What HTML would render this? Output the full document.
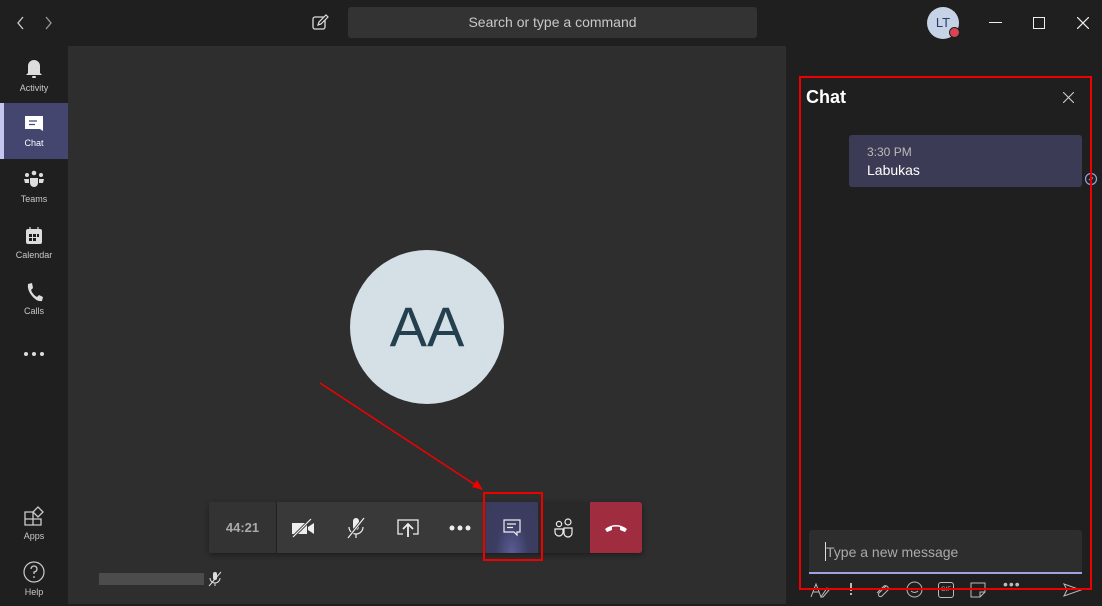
<!DOCTYPE html>
<html><head><meta charset="utf-8"><style>
*{margin:0;padding:0;box-sizing:border-box}
body{width:1102px;height:604px;background:#1f1f1f;font-family:"Liberation Sans","Segoe UI",sans-serif;position:relative;overflow:hidden;color:#ddd}
.abs{position:absolute}
.rail .it{position:absolute;left:0;width:68px;height:56px;text-align:center;font-size:9px;color:#c8c8c8}
.rail .it svg{display:block;margin:11px auto 4px}
.tb{position:absolute;top:502px;height:51px;width:52px;display:flex;align-items:center;justify-content:center}
</style></head><body>
<!-- title bar -->
<svg class="abs" style="left:14px;top:15px" width="44" height="16"><path d="M9 2 L4 8 L9 14" stroke="#ccc" fill="none" stroke-width="1.3"/><path d="M32 2 L37 8 L32 14" stroke="#999" fill="none" stroke-width="1.3"/></svg>
<svg class="abs" style="left:311px;top:14px" width="18" height="18"><rect x="2" y="3" width="12" height="12" rx="2" stroke="#ddd" fill="none" stroke-width="1.3"/><path d="M7 11 L8 8 L15 1 L17 3 L10 10 Z" fill="#1f1f1f" stroke="#ddd" stroke-width="1.2"/></svg>
<div class="abs" style="left:348px;top:7px;width:409px;height:31px;background:#333;border-radius:3px;color:#c8c8c8;font-size:14px;text-align:center;line-height:31px">Search or type a command</div>
<div class="abs" style="left:927px;top:7px;width:32px;height:32px;border-radius:50%;background:#c6d3e6;color:#2a3a6a;font-size:13px;line-height:32px;text-align:center">LT</div>
<div class="abs" style="left:949px;top:27px;width:11px;height:11px;border-radius:50%;background:#d74654;border:1.5px solid #1f1f1f"></div>
<div class="abs" style="left:989px;top:22px;width:13px;height:1px;background:#eee"></div>
<div class="abs" style="left:1033px;top:17px;width:12px;height:12px;border:1.3px solid #eee"></div>
<svg class="abs" style="left:1077px;top:17px" width="12" height="12"><path d="M0 0L12 12M12 0L0 12" stroke="#eee" stroke-width="1.2"/></svg>
<!-- rail -->
<div class="rail">
<div class="it" style="top:46px"><svg width="20" height="22" viewBox="0 0 20 22"><path d="M4 16 L4 9 A6 6 0 0 1 16 9 L16 16 L18 18 L2 18 Z" fill="#ddd"/><rect x="8" y="19" width="4" height="2" rx="1" fill="#ddd"/></svg>Activity</div>
<div class="it" style="top:103px;background:#444670;height:56px;color:#fff"><div class="abs" style="left:0;top:0;width:4px;height:56px;background:#c4c6f0"></div><svg width="20" height="20" viewBox="0 0 20 20"><path d="M1 2 H19 V17 L16 15 H1 Z" fill="#fff"/><path d="M5 7H13M5 10.5H11" stroke="#444670" stroke-width="1.2"/></svg>Chat</div>
<div class="it" style="top:159px"><svg width="22" height="20" viewBox="0 0 22 20"><circle cx="11" cy="3" r="2.3" fill="#ddd"/><circle cx="4" cy="5" r="2" fill="#ddd"/><circle cx="18" cy="5" r="2" fill="#ddd"/><path d="M7 8H15V13A4 4 0 0 1 7 13Z" fill="#ddd"/><path d="M1 9H6V13H2Z M16 9H21L20 13H16Z" fill="#ddd"/></svg>Teams</div>
<div class="it" style="top:215px"><svg width="18" height="20" viewBox="0 0 18 20"><rect x="1" y="3" width="16" height="15" rx="2" fill="#ddd"/><path d="M5 1V4M13 1V4" stroke="#ddd" stroke-width="1.2"/><rect x="4" y="8" width="3" height="3" fill="#1f1f1f"/><rect x="8" y="8" width="3" height="3" fill="#1f1f1f"/><rect x="12" y="8" width="2" height="3" fill="#1f1f1f"/><rect x="4" y="12" width="3" height="3" fill="#1f1f1f"/><rect x="8" y="12" width="3" height="3" fill="#1f1f1f"/></svg>Calendar</div>
<div class="it" style="top:271px"><svg width="18" height="20" viewBox="0 0 18 20"><path d="M3 2 L7 1 L8 6 L6 8 Q8 13 12 15 L14 13 L18 15 L17 19 Q12 20 7 14 Q2 8 3 2Z" fill="#ddd"/></svg>Calls</div>
<div class="abs" style="left:24px;top:352px;width:20px;height:4px;display:flex;justify-content:space-between"><i style="width:4px;height:4px;border-radius:50%;background:#ddd"></i><i style="width:4px;height:4px;border-radius:50%;background:#ddd"></i><i style="width:4px;height:4px;border-radius:50%;background:#ddd"></i></div>
<div class="it" style="top:494px"><svg width="22" height="22" viewBox="0 0 22 22"><path d="M2 7H10V20H2Z M2 14H18V20H10" stroke="#ccc" fill="none" stroke-width="1.3"/><path d="M15 2 L20 7 L15 12 L10 7 Z" stroke="#ccc" fill="none" stroke-width="1.3"/></svg>Apps</div>
<div class="it" style="top:550px"><svg width="22" height="22" viewBox="0 0 22 22"><circle cx="11" cy="11" r="10" stroke="#ccc" fill="none" stroke-width="1.2"/><path d="M8 8 A3 3 0 1 1 11 11 V13" stroke="#ccc" fill="none" stroke-width="1.3"/><circle cx="11" cy="16" r="0.9" fill="#ccc"/></svg>Help</div>
</div>
<!-- main -->
<div class="abs" style="left:68px;top:46px;width:718px;height:558px;background:#2e2e2e"></div>
<div class="abs" style="left:350px;top:250px;width:154px;height:154px;border-radius:50%;background:#d4e0e6;color:#24404e;font-size:56px;text-align:center;line-height:154px">AA</div>
<div class="abs" style="left:209px;top:502px;width:433px;height:51px;background:#393939;border-radius:3px;box-shadow:0 2px 6px rgba(0,0,0,.4)"></div>
<div class="abs" style="left:209px;top:502px;width:68px;height:51px;background:#333;color:#aaa;font-weight:bold;font-size:13px;line-height:51px;text-align:center;border-right:1px solid #222">44:21</div>
<div class="tb" style="left:278px"><svg width="26" height="20" viewBox="0 0 26 20"><rect x="1" y="5" width="15" height="11" fill="#eee"/><path d="M17 9 L23 5 V16 L17 12Z" fill="#eee"/><path d="M2 19 L20 1" stroke="#393939" stroke-width="3"/><path d="M2 19 L20 1" stroke="#eee" stroke-width="1.2"/></svg></div>
<div class="tb" style="left:330px"><svg width="22" height="24" viewBox="0 0 22 24"><rect x="8" y="2" width="6" height="12" rx="3" fill="#eee"/><path d="M4 11 A7 7 0 0 0 18 11 M11 18V22" stroke="#eee" fill="none" stroke-width="1.2"/><path d="M3 22 L19 2" stroke="#393939" stroke-width="3"/><path d="M3 22 L19 2" stroke="#eee" stroke-width="1.2"/></svg></div>
<div class="tb" style="left:382px"><svg width="24" height="20" viewBox="0 0 24 20"><path d="M7 16H2V2H22V16H17" stroke="#eee" fill="none" stroke-width="1.3"/><path d="M12 19V6M7 11L12 6L17 11" stroke="#eee" fill="none" stroke-width="1.8"/></svg></div>
<div class="tb" style="left:434px"><svg width="22" height="6"><circle cx="3" cy="3" r="2.5" fill="#eee"/><circle cx="11" cy="3" r="2.5" fill="#eee"/><circle cx="19" cy="3" r="2.5" fill="#eee"/></svg></div>
<div class="tb" style="left:486px;background:radial-gradient(ellipse at 50% 100%,#5a5c96 0%,#3c3d62 45%,#3a3b5c 100%)"><svg width="18" height="18" viewBox="0 0 18 18"><path d="M1 1H17V13H14V16L11 13H1Z" stroke="#eee" fill="none" stroke-width="1.2"/><path d="M4 5H13M4 8.5H10" stroke="#eee" stroke-width="1.2"/></svg></div>
<div class="tb" style="left:538px;background:#292929"><svg width="20" height="20" viewBox="0 0 20 20"><circle cx="5" cy="6" r="2.6" stroke="#eee" fill="none" stroke-width="1.2"/><circle cx="14" cy="4" r="3" stroke="#eee" fill="none" stroke-width="1.2"/><path d="M1 11H9V14A4 4 0 0 1 1 14Z M10 10H18V15A4 4 0 0 1 10 15Z" stroke="#eee" fill="none" stroke-width="1.2"/></svg></div>
<div class="tb" style="left:590px;background:#a02c3f;border-radius:0 3px 3px 0"><svg width="24" height="10" viewBox="0 0 24 10"><path d="M1 6 Q12 -2 23 6 L21 9 L16 7 V4 Q12 3 8 4 V7 L3 9Z" fill="#fff"/></svg></div>
<div class="abs" style="left:99px;top:573px;width:105px;height:12px;background:#5a5a5a;opacity:.7"></div>
<svg class="abs" style="left:208px;top:571px" width="14" height="16" viewBox="0 0 14 16"><rect x="5" y="1" width="4" height="8" rx="2" fill="#ddd"/><path d="M2 7A5 5 0 0 0 12 7M7 12V15" stroke="#ddd" fill="none"/><path d="M1 15L13 1" stroke="#ddd"/></svg>
<!-- chat panel -->
<div class="abs" style="left:806px;top:87px;font-size:18px;font-weight:bold;color:#fff">Chat</div>
<svg class="abs" style="left:1063px;top:92px" width="11" height="11"><path d="M0 0L11 11M11 0L0 11" stroke="#ccc" stroke-width="1.1"/></svg>
<div class="abs" style="left:849px;top:135px;width:233px;height:52px;background:#3b3b56;border-radius:3px"></div>
<div class="abs" style="left:867px;top:145px;font-size:12px;color:#bbb">3:30 PM</div>
<div class="abs" style="left:867px;top:162px;font-size:14px;color:#fff">Labukas</div>
<svg class="abs" style="left:1084px;top:172px" width="14" height="14"><circle cx="7" cy="7" r="5.5" stroke="#9aa0e0" fill="none" stroke-width="1.2"/><path d="M5 7l1.5 1.5L9 5.5" stroke="#9aa0e0" fill="none"/></svg>
<div class="abs" style="left:809px;top:530px;width:273px;height:44px;background:#2d2d2d;border-radius:3px 3px 0 0;border-bottom:2px solid #9ea2e0"></div>
<div class="abs" style="left:825px;top:542px;width:1px;height:19px;background:#ddd"></div>
<div class="abs" style="left:826px;top:544px;font-size:14px;color:#aaa">Type a new message</div>
<div class="abs" style="left:810px;top:580px;width:275px;height:20px;color:#bbb;font-size:14px">
<svg class="abs" style="left:0;top:2px" width="20" height="16"><path d="M1 15L6 2L11 15M3 10H9M11 15L17 6L19 8L13 15Z" stroke="#bbb" fill="none"/></svg>
<div class="abs" style="left:40px;top:3px;width:2px;height:8px;background:#bbb"></div><div class="abs" style="left:40px;top:13px;width:2px;height:2px;background:#bbb"></div>
<svg class="abs" style="left:64px;top:2px" width="16" height="16"><path d="M12 4L5 11A2 2 0 0 0 8 14L14 8A3 3 0 0 0 10 4L3 11" stroke="#bbb" fill="none"/></svg>
<svg class="abs" style="left:96px;top:1px" width="17" height="17"><circle cx="8.5" cy="8.5" r="7.5" stroke="#bbb" fill="none"/><path d="M5 10Q8.5 13 12 10" stroke="#bbb" fill="none"/></svg>
<div class="abs" style="left:128px;top:2px;width:16px;height:16px;border:1px solid #bbb;border-radius:3px;font-size:6px;line-height:14px;text-align:center">GIF</div>
<svg class="abs" style="left:160px;top:2px" width="16" height="16"><path d="M1 1H15V10L10 15H1Z M10 15V10H15" stroke="#bbb" fill="none"/></svg>
<div class="abs" style="left:193px;top:-4px;letter-spacing:1px">•••</div>
<svg class="abs" style="left:253px;top:3px" width="19" height="14"><path d="M1 1L18 7L1 13L4 7Z" stroke="#bbb" fill="none"/></svg>
</div>
<!-- red annotations -->
<div class="abs" style="left:799px;top:76px;width:293px;height:514px;border:2px solid #e00"></div>
<div class="abs" style="left:483px;top:492px;width:60px;height:69px;border:2px solid #e00"></div>
<svg class="abs" style="left:0;top:0" width="1102" height="604"><path d="M320 383L480 488" stroke="#e00" stroke-width="1.6"/><path d="M483 490L472 487L477 480Z" fill="#e00"/></svg>
</body></html>
